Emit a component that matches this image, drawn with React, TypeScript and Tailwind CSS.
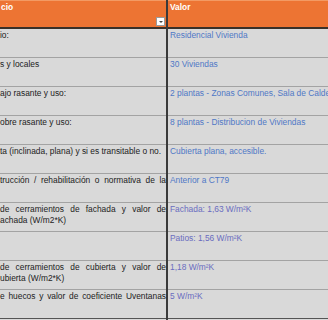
const rows = [
  { left: ["io:"], value: "Residencial Vivienda", tone: "blue" },
  { left: ["s y locales"], value: "30 Viviendas", tone: "blue" },
  { left: ["ajo rasante y uso:"], value: "2 plantas - Zonas Comunes, Sala de Calderas", tone: "blue" },
  { left: ["obre rasante y uso:"], value: "8 plantas - Distribucion de Viviendas", tone: "blue" },
  { left: ["ta (inclinada, plana) y si es transitable o no."], value: "Cubierta plana, accesible.", tone: "blue" },
  { left: ["trucción / rehabilitación o normativa de la"], justify: true, value: "Anterior a CT79", tone: "blue" },
  { left: ["de cerramientos de fachada y valor de", "achada (W/m2*K)"], justify: true, value: "Fachada: 1,63 W/m²K", tone: "violet" },
  { left: [], value: "Patios: 1,56 W/m²K", tone: "violet" },
  { left: ["de cerramientos de cubierta y valor de", "ubierta (W/m2*K)"], justify: true, value: "1,18 W/m²K", tone: "violet" },
  { left: ["e huecos y valor de coeficiente Uventanas"], justify: true, value: "5 W/m²K", tone: "violet" },
];

export default function App() {
  return (
    <div className="flex w-[328px] h-[320px] overflow-hidden bg-[#d9d9d9] font-['Liberation_Sans',Arial,sans-serif] text-[8.4px] leading-[11px]">
      {/* descripcion */}
      <div className="w-[166px] shrink-0">
        <div className="relative h-[29px] bg-[#ed7433] border-t border-[#f39a63] border-b-2 border-b-[#3a3028] px-[1px] pt-[1px] font-bold text-white">
          cio
          <div className="absolute right-[1px] bottom-[1px] w-[9px] h-[9px] bg-white border border-[#9a9a9a] flex items-center justify-center">
            <div className="w-0 h-0 border-l-[2px] border-r-[2px] border-t-[2px] border-l-transparent border-r-transparent border-t-[#444]" />
          </div>
        </div>
        {rows.map((r, i) => (
          <div
            key={i}
            className={`h-[29px] border-b pt-[1px] text-[#222] overflow-hidden ${i === rows.length - 1 ? "border-[#555]" : "border-[#a3a3a3]"}`}
          >
            {r.left.map((line, j) => (
              <div
                key={j}
                className={`whitespace-nowrap ${r.justify && j === 0 ? "w-[166px] text-justify [text-align-last:justify] whitespace-normal" : ""}`}
              >
                {line}
              </div>
            ))}
          </div>
        ))}
      </div>

      <div className="w-[2px] shrink-0 bg-[#3a3a3a]" />

      {/* valor */}
      <div className="flex-1 min-w-0">
        <div className="h-[29px] bg-[#ed7433] border-t border-[#f39a63] border-b-2 border-b-[#3a3028] px-[2px] pt-[1px] font-bold text-white">
          Valor
        </div>
        {rows.map((r, i) => (
          <div
            key={i}
            className={`h-[29px] border-b pt-[1px] px-[2px] whitespace-nowrap overflow-hidden ${i === rows.length - 1 ? "border-[#555]" : "border-[#a3a3a3]"} ${r.tone === "blue" ? "text-[#4f78c6]" : "text-[#6a6cc0]"}`}
          >
            {r.value}
          </div>
        ))}
      </div>
    </div>
  );
}
